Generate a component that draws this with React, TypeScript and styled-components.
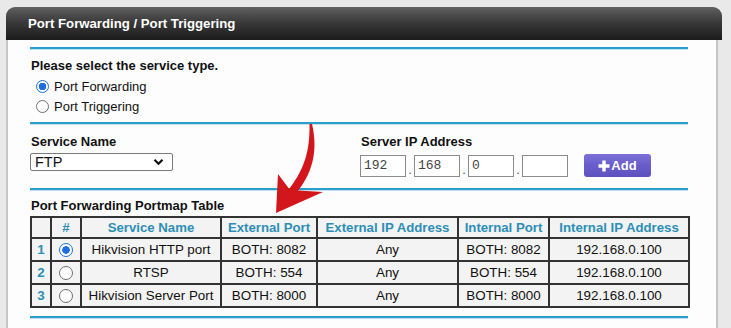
import React from 'react';
import styled, { createGlobalStyle } from 'styled-components';

const GlobalStyle = createGlobalStyle`
  html, body {
    margin: 0;
    padding: 0;
    background: #e9e9e9;
    font-family: 'Liberation Sans', Arial, sans-serif;
    font-size: 13px;
    color: #111;
  }
`;

const Page = styled.div`
  position: relative;
  width: 731px;
  height: 328px;
  overflow: hidden;
  padding: 7px 0 0 6px;
  box-sizing: border-box;
`;

const Panel = styled.div`
  width: 716px;
  display: flex;
  flex-direction: column;
`;

const Header = styled.div`
  height: 33px;
  border-radius: 9px 9px 0 0;
  background: linear-gradient(to bottom, #606060 0%, #3a3a3a 45%, #1c1c1c 100%);
  display: flex;
  align-items: center;
  padding-left: 22px;
  color: #fff;
  font-weight: bold;
  font-size: 13.2px;
`;

const Body = styled.div`
  width: 712px;
  background: #fdfdfd;
  border-left: 2px solid #c6c6c6;
  border-right: 2px solid #c6c6c6;
  padding: 7px 0 20px 22px;
  box-sizing: border-box;
  display: flex;
  flex-direction: column;
`;

const Divider = styled.div<{ gap?: number }>`
  width: 658px;
  height: 2px;
  background: #2a9fce;
  box-shadow: 0 1px 0 #bfe3f1;
  margin-top: ${({ gap }) => gap ?? 0}px;
`;

const Section = styled.div`
  display: flex;
  flex-direction: column;
`;

const Label = styled.div`
  font-weight: bold;
  line-height: 20px;
  padding-left: 1px;
`;

const OptionRow = styled.label`
  display: flex;
  align-items: center;
  gap: 5px;
  height: 20px;
  padding-left: 6px;
`;

const Radio = styled.span<{ checked?: boolean }>`
  width: 11px;
  height: 11px;
  border-radius: 50%;
  border: 1px solid ${({ checked }) => (checked ? '#1a6fd8' : '#6f6f6f')};
  background: ${({ checked }) =>
    checked ? 'radial-gradient(circle, #1d6fe0 0 3.5px, #fff 4px)' : '#fff'};
  display: inline-block;
  flex-shrink: 0;
`;

const FieldGrid = styled.div`
  display: grid;
  grid-template-columns: 330px auto;
  margin-top: 8px;
`;

const Field = styled.div`
  display: flex;
  flex-direction: column;
`;

const Select = styled.div`
  margin-top: 1px;
  width: 143px;
  height: 18px;
  box-sizing: border-box;
  border: 1px solid #7a7a7a;
  border-radius: 2px;
  background: #fff;
  display: flex;
  align-items: center;
  justify-content: space-between;
  padding: 0 8px 0 4px;
  font-size: 14.5px;
`;

const IpRow = styled.div`
  display: flex;
  align-items: center;
  margin-top: 2px;
`;

const IpBox = styled.div`
  width: 46px;
  height: 22px;
  box-sizing: border-box;
  border: 1px solid #8c8c8c;
  background: #fff;
  font-family: 'Liberation Mono', 'Courier New', monospace;
  font-size: 13px;
  color: #444;
  display: flex;
  align-items: center;
  padding-left: 3px;
`;

const Dot = styled.span`
  width: 8px;
  text-align: center;
  align-self: flex-end;
  line-height: 14px;
  color: #555;
`;

const AddButton = styled.button`
  margin-left: 16px;
  width: 67px;
  height: 23px;
  border: none;
  border-radius: 3px;
  background: linear-gradient(to bottom, #7c70d8 0%, #6a5dcb 50%, #5d50bf 100%);
  color: #fff;
  font-family: 'Liberation Sans', Arial, sans-serif;
  font-weight: bold;
  font-size: 13px;
  display: flex;
  align-items: center;
  justify-content: center;
  gap: 1px;
  padding: 0;
`;

const TableTitle = styled.div`
  font-weight: bold;
  line-height: 18px;
  margin-top: 7px;
  padding-left: 1px;
`;

const Table = styled.table`
  margin-top: 1px;
  width: 658px;
  table-layout: fixed;
  border-collapse: collapse;
  border: 2px solid #333;
`;

const Th = styled.th`
  height: 19px;
  padding: 0;
  border: 2px solid #333;
  background: #f3f3f3;
  color: #2d8fb6;
  font-weight: bold;
  font-size: 13.2px;
  text-align: center;
`;

const Td = styled.td<{ num?: boolean }>`
  height: 21px;
  padding: 0;
  border: 2px solid #333;
  background: #f3f3f3;
  text-align: center;
  font-size: 13.4px;
  color: ${({ num }) => (num ? '#2d8fb6' : '#111')};
  font-weight: ${({ num }) => (num ? 'bold' : 'normal')};
`;

const CellRadio = styled(Radio)`
  width: 12px;
  height: 12px;
  vertical-align: middle;
`;

const ArrowLayer = styled.svg`
  position: absolute;
  left: 0;
  top: 0;
  pointer-events: none;
`;

const rows = [
  { name: 'Hikvision HTTP port', ext: 'BOTH: 8082', extIp: 'Any', int: 'BOTH: 8082', ip: '192.168.0.100' },
  { name: 'RTSP', ext: 'BOTH: 554', extIp: 'Any', int: 'BOTH: 554', ip: '192.168.0.100' },
  { name: 'Hikvision Server Port', ext: 'BOTH: 8000', extIp: 'Any', int: 'BOTH: 8000', ip: '192.168.0.100' },
];

const cols = [20, 30, 140, 96, 141, 91, 140];

export default function App() {
  return (
    <>
      <GlobalStyle />
      <Page>
        <Panel>
          <Header>Port Forwarding / Port Triggering</Header>
          <Body>
            <Divider />
            <Section style={{ marginTop: 7 }}>
              <Label>Please select the service type.</Label>
              <OptionRow>
                <Radio checked />
                Port Forwarding
              </OptionRow>
              <OptionRow>
                <Radio />
                Port Triggering
              </OptionRow>
            </Section>
            <Divider gap={6} />
            <FieldGrid>
              <Field>
                <Label>Service Name</Label>
                <Select>
                  FTP
                  <svg width="11" height="8" viewBox="0 0 11 8">
                    <path d="M1.5 1.8 L5.5 5.8 L9.5 1.8" fill="none" stroke="#111" strokeWidth="2.2" />
                  </svg>
                </Select>
              </Field>
              <Field>
                <Label>Server IP Address</Label>
                <IpRow>
                  <IpBox>192</IpBox>
                  <Dot>.</Dot>
                  <IpBox>168</IpBox>
                  <Dot>.</Dot>
                  <IpBox>0</IpBox>
                  <Dot>.</Dot>
                  <IpBox />
                  <AddButton>
                    <svg width="12" height="12" viewBox="0 0 12 12">
                      <path d="M4.3 0.5h3.4v3.8h3.8v3.4H7.7v3.8H4.3V7.7H0.5V4.3h3.8z" fill="#fff" />
                    </svg>
                    Add
                  </AddButton>
                </IpRow>
              </Field>
            </FieldGrid>
            <Divider gap={11} />
            <TableTitle>Port Forwarding Portmap Table</TableTitle>
            <Table>
              <colgroup>
                {cols.map((w, i) => (
                  <col key={i} style={{ width: w }} />
                ))}
              </colgroup>
              <thead>
                <tr>
                  <Th />
                  <Th>#</Th>
                  <Th>Service Name</Th>
                  <Th>External Port</Th>
                  <Th>External IP Address</Th>
                  <Th>Internal Port</Th>
                  <Th>Internal IP Address</Th>
                </tr>
              </thead>
              <tbody>
                {rows.map((r, i) => (
                  <tr key={i}>
                    <Td num>{i + 1}</Td>
                    <Td>
                      <CellRadio checked={i === 0} />
                    </Td>
                    <Td>{r.name}</Td>
                    <Td>{r.ext}</Td>
                    <Td>{r.extIp}</Td>
                    <Td>{r.int}</Td>
                    <Td>{r.ip}</Td>
                  </tr>
                ))}
              </tbody>
            </Table>
            <Divider gap={8} />
          </Body>
        </Panel>
        <ArrowLayer width="731" height="328" viewBox="0 0 731 328">
          <path
            d="M312 124 C318 150 314 174 292 198 L286 193 C305 170 310 150 309.5 124 Z"
            fill="#d2161b"
          />
          <path d="M276 213 L278 174 L290 190 L323 192 Z" fill="#d2161b" />
        </ArrowLayer>
      </Page>
    </>
  );
}
